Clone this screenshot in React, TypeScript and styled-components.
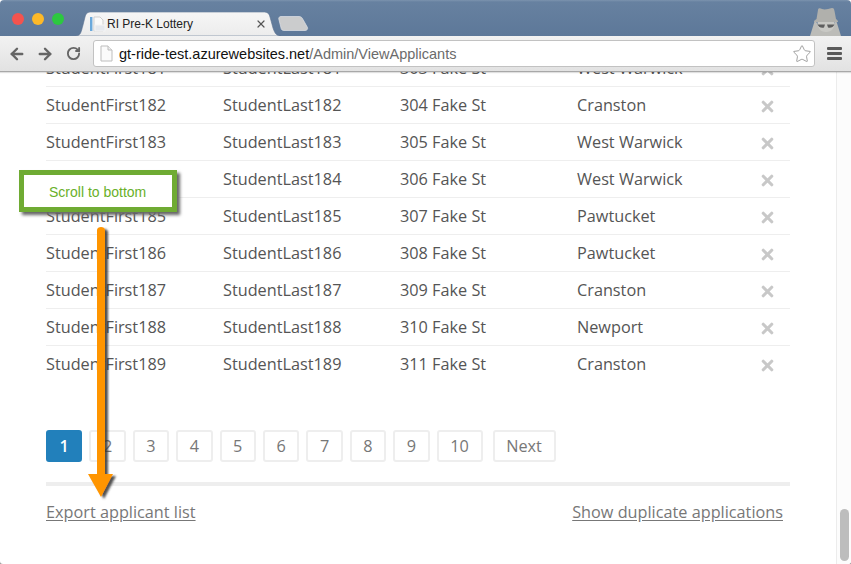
import React from 'react';
import styled, { createGlobalStyle } from 'styled-components';
import { ArrowLeft, ArrowRight, RotateCw, Star, X } from 'lucide-react';

const Global = createGlobalStyle`
  html, body { margin: 0; padding: 0; overflow: hidden; }
  html { background: linear-gradient(#fff 50%, #9a9a9a 50%); height: 564px; }
  * { box-sizing: border-box; }
`;

const Page = styled.div`
  position: relative;
  width: 851px;
  height: 564px;
  overflow: hidden;
  display: flex;
  flex-direction: column;
  background: #fff;
  border-radius: 4px 4px 3px 3px;
  font-family: "Open Sans", sans-serif;
  color: #555;
`;

const TitleBar = styled.div`
  height: 36px;
  flex: none;
  display: flex;
  align-items: flex-end;
  padding-left: 12px;
  background: linear-gradient(#7c93ae 0, #6781a0 2px, #5d7899 100%);
`;

const Lights = styled.div`
  display: flex;
  gap: 8px;
  align-self: flex-start;
  margin-top: 13px;
  margin-right: 11px;
`;

const Light = styled.span<{ $c: string }>`
  width: 12px;
  height: 12px;
  border-radius: 50%;
  background: ${p => p.$c};
`;

const Tab = styled.div`
  position: relative;
  width: 206px;
  height: 24px;
  flex: none;
  display: flex;
  align-items: center;
  padding-left: 15px;
  font: 12px "Liberation Sans", Arial, sans-serif;
  color: #222;
`;

const TabShape = styled.svg`
  position: absolute;
  inset: 0;
  width: 206px;
  height: 24px;
`;

const TabFavicon = styled.svg`
  position: relative;
  width: 17px;
  height: 16px;
`;

const TabTitle = styled.span`
  position: relative;
  flex: 1;
`;

const TabClose = styled(X)`
  position: relative;
  margin-right: 14px;
  color: #555;
`;

const NewTab = styled.svg`
  width: 31px;
  height: 15px;
  margin-left: -3px;
  margin-bottom: 5px;
  flex: none;
`;

const Spy = styled.svg`
  width: 34px;
  height: 36px;
  margin-left: auto;
  margin-right: 9px;
  flex: none;
`;

const Toolbar = styled.div`
  height: 36px;
  flex: none;
  display: flex;
  align-items: center;
  padding-left: 3px;
  background: linear-gradient(#f2f2f2, #e2e2e2);
  border-bottom: 1px solid #a8a8a8;
  box-shadow: 0 1px 1px rgba(0,0,0,.12);
  position: relative;
  z-index: 2;
  color: #666;
`;

const NavButton = styled.span`
  width: 28px;
  display: flex;
  justify-content: center;
`;

const UrlBar = styled.div`
  width: 722px;
  height: 27px;
  margin-left: 6px;
  display: flex;
  align-items: center;
  background: #fff;
  border: 1px solid #c2c2c2;
  border-radius: 3px;
  padding-left: 6px;
  font: 14.5px "Liberation Sans", Arial, sans-serif;
  color: #111;
`;

const PageGlyph = styled.svg`
  width: 13px;
  height: 17px;
  margin-right: 6px;
  flex: none;
`;

const UrlPath = styled.span`
  color: #6b6b6b;
`;

const UrlStar = styled(Star)`
  margin-left: auto;
  margin-right: 2px;
  color: #8f8f8f;
`;

const MenuIcon = styled.div`
  width: 15px;
  margin-left: 12px;
  display: flex;
  flex-direction: column;
  gap: 2px;
`;

const MenuBar = styled.span`
  height: 3px;
  border-radius: 1px;
  background: #5a5a5a;
`;

const Viewport = styled.div`
  flex: 1;
  display: flex;
  min-height: 0;
  overflow: hidden;
`;

const Main = styled.main`
  flex: 1;
  padding: 0 46px;
  min-width: 0;
`;

const Rows = styled.div`
  margin-top: -22px;
`;

const Row = styled.div`
  display: grid;
  grid-template-columns: 177px 177px 177px 1fr 29px;
  align-items: center;
  height: 37px;
  font-size: 16.25px;
  border-bottom: 1px solid #eeeeee;
  &:last-child { border-bottom-color: transparent; }
`;

const RemoveIcon = styled(X)`
  color: #c8c8c8;
  justify-self: start;
  margin: 2px 0 0 -2.5px;
`;

const Pager = styled.nav`
  display: flex;
  gap: 7px;
  margin-top: 47px;
`;

const PageButton = styled.span<{ $active?: boolean; $w?: number; $gap?: boolean }>`
  width: ${p => p.$w ?? 36.4}px;
  margin-left: ${p => (p.$gap ? 3 : 0)}px;
  height: 32px;
  display: flex;
  align-items: center;
  justify-content: center;
  border-radius: 3px;
  font-size: 16.25px;
  color: ${p => (p.$active ? '#fff' : '#777')};
  font-weight: ${p => (p.$active ? 600 : 400)};
  background: ${p => (p.$active ? '#2280bb' : '#fff')};
  border: 2px solid ${p => (p.$active ? '#2280bb' : '#eeeeee')};
`;

const Rule = styled.hr`
  height: 4px;
  border: 0;
  margin: 20px 0 0;
  background: #eeeeee;
`;

const Links = styled.div`
  display: flex;
  justify-content: space-between;
  padding: 15px 7px 0 0;
`;

const Link = styled.a`
  font-size: 16.25px;
  line-height: 22px;
  color: #777;
  text-decoration: underline;
  text-underline-offset: 2px;
`;

const Gutter = styled.aside`
  width: 15px;
  flex: none;
  position: relative;
  border-left: 1px solid #ececec;
  background: #fcfcfc;
  display: flex;
  flex-direction: column;
  justify-content: flex-end;
  align-items: center;
  padding: 0 0 3px 1px;
`;

const Thumb = styled.div`
  width: 9px;
  height: 52px;
  border-radius: 5px;
  background: #bdbdbd;
`;

const Callout = styled.div`
  position: absolute;
  left: 19px;
  top: 170px;
  width: 158px;
  height: 42px;
  border: 5px solid #6fab33;
  background: #fff;
  box-shadow: 3px 3px 3px #666;
  display: flex;
  align-items: center;
  padding: 2px 0 0 25px;
  font: 14px "Liberation Sans", Arial, sans-serif;
  color: #69b02a;
  z-index: 3;
`;

const ArrowArt = styled.svg`
  position: absolute;
  left: 80px;
  top: 220px;
  width: 50px;
  height: 290px;
  overflow: visible;
  z-index: 3;
`;

const rows = [
  [181, 303, 'West Warwick'],
  [182, 304, 'Cranston'],
  [183, 305, 'West Warwick'],
  [184, 306, 'West Warwick'],
  [185, 307, 'Pawtucket'],
  [186, 308, 'Pawtucket'],
  [187, 309, 'Cranston'],
  [188, 310, 'Newport'],
  [189, 311, 'Cranston'],
] as const;

export default function App() {
  return (
    <Page>
      <Global />
      <TitleBar>
        <Lights>
          <Light $c="#f4534e" />
          <Light $c="#fdb928" />
          <Light $c="#2cc840" />
        </Lights>
        <Tab>
          <TabShape viewBox="0 0 206 24">
            <defs>
              <linearGradient id="tabg" x1="0" y1="0" x2="0" y2="1">
                <stop offset="0" stopColor="#f6f6f6" />
                <stop offset="1" stopColor="#ececec" />
              </linearGradient>
            </defs>
            <path d="M0 24 C6 24 6 20 8 13 L10 5 C11 1 13 0 16 0 L188 0 C192 0 194 1 195 5 L198 16 C200 22 202 24 206 24 Z" fill="url(#tabg)" stroke="#5b7290" strokeWidth=".6" />
          </TabShape>
          <TabFavicon viewBox="0 0 17 16">
            <rect x="0" y="1" width="2.4" height="14" fill="#6aa9dc" />
            <path d="M4 1 H10 L13 4 V15 H4 Z" fill="#fafafa" stroke="#cfcfcf" />
            <rect x="5" y="9" width="10" height="6" fill="#e4e8ee" stroke="#f4f4f4" />
          </TabFavicon>
          <TabTitle>RI Pre-K Lottery</TabTitle>
          <TabClose size={12} strokeWidth={2.4} />
        </Tab>
        <NewTab viewBox="0 0 31 15">
          <path d="M3 .5 H21 C23 .5 24 1.5 25 3.5 L29.5 11.5 C30 13 29 14.5 27 14.5 H6 C4 14.5 3.2 13.5 2.8 11 L.8 3 C.5 1.5 1.5 .5 3 .5 Z" fill="#cbcccd" stroke="#dfe3e8" strokeWidth=".7" />
        </NewTab>
        <Spy viewBox="0 0 34 36">
          <path d="M7 20 L2 36 H33 L28 20 L24 28 H12 Z" fill="#bcbcb8" />
          <path d="M10 10 C10 8 12 8 14 9 C17 10 20 9 24 8 C26 8 26 9 26.5 11 L28 19 C29.5 20 30 21 30 22 H6 C6 21 7 20 8.5 19 Z" fill="#b0b0ac" />
          <path d="M9.5 22 H26.5 C26.5 28 24 32 18 32 C12 32 9.5 28 9.5 22 Z" fill="#c9c9c5" />
          <path d="M9.5 24.5 H17 L16 27.5 C13.5 28.5 10.5 27 9.5 24.5 Z M19 24.5 H26.5 C25.5 27 22.5 28.5 20 27.5 Z" fill="#5e5e5e" />
        </Spy>
      </TitleBar>
      <Toolbar>
        <NavButton><ArrowLeft size={18} strokeWidth={3.2} /></NavButton>
        <NavButton><ArrowRight size={18} strokeWidth={3.2} /></NavButton>
        <NavButton><RotateCw size={15} strokeWidth={3} /></NavButton>
        <UrlBar>
          <PageGlyph viewBox="0 0 13 17">
            <path d="M1 1 H8 L12 5 V16 H1 Z" fill="#fbfbfb" stroke="#bdbdbd" />
            <path d="M8 1 V5 H12" fill="#eee" stroke="#bdbdbd" />
          </PageGlyph>
          gt-ride-test.azurewebsites.net<UrlPath>/Admin/ViewApplicants</UrlPath>
          <UrlStar size={20} strokeWidth={1} />
        </UrlBar>
        <MenuIcon><MenuBar /><MenuBar /><MenuBar /></MenuIcon>
      </Toolbar>
      <Viewport>
        <Main>
          <Rows>
            {rows.map(([n, a, c]) => (
              <Row key={n}>
                <span>StudentFirst{n}</span>
                <span>StudentLast{n}</span>
                <span>{a} Fake St</span>
                <span>{c}</span>
                <RemoveIcon size={17} strokeWidth={4.4} />
              </Row>
            ))}
          </Rows>
          <Pager>
            <PageButton $active>1</PageButton>
            {[2, 3, 4, 5, 6, 7, 8, 9].map(n => <PageButton key={n}>{n}</PageButton>)}
            <PageButton $w={46}>10</PageButton>
            <PageButton $w={63} $gap>Next</PageButton>
          </Pager>
          <Rule />
          <Links>
            <Link>Export applicant list</Link>
            <Link>Show duplicate applications</Link>
          </Links>
        </Main>
        <Gutter><Thumb /></Gutter>
      </Viewport>
      <Callout>Scroll to bottom</Callout>
      <ArrowArt viewBox="0 0 50 290">
        <defs>
          <filter id="ds" x="-50%" y="-5%" width="200%" height="110%">
            <feDropShadow dx="3" dy="2" stdDeviation="1" floodColor="#333" floodOpacity=".85" />
          </filter>
        </defs>
        <path d="M17 10 C17 6 25 6 25 10 V254 H33 L21 277 L8 254 H17 Z" fill="#ff9500" filter="url(#ds)" />
      </ArrowArt>
    </Page>
  );
}
